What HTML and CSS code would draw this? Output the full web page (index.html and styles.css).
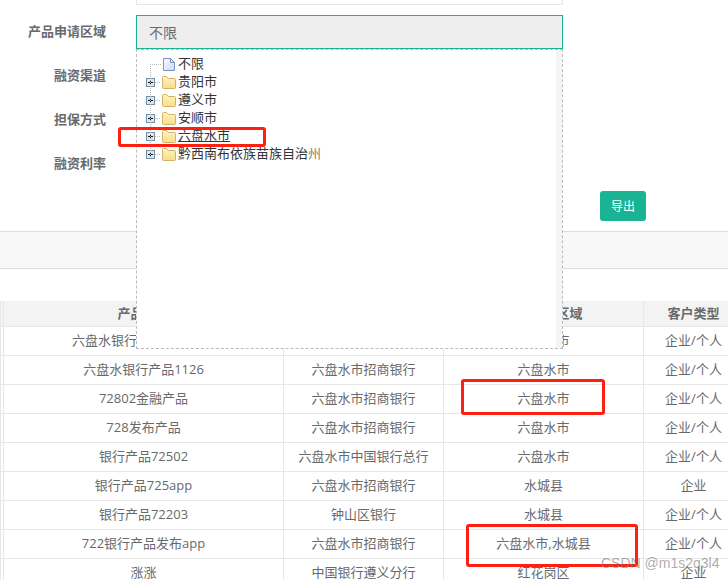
FILE: index.html
```html
<!DOCTYPE html>
<html lang="en">
<head>
    <meta charset="UTF-8">
    <meta name="viewport" content="width=device-width, initial-scale=1.0">
    <title>产品列表</title>
    <link rel="stylesheet" href="styles.css">
</head>
<body>
    <svg class="icon-defs" width="0" height="0">
        <defs>
            <linearGradient id="file-fill" x1="0" y1="0" x2="1" y2="1">
                <stop offset="0" stop-color="#fbfdff"/>
                <stop offset="1" stop-color="#c9d9f3"/>
            </linearGradient>
            <linearGradient id="folder-fill" x1="0" y1="0" x2="0" y2="1">
                <stop offset="0" stop-color="#fdf3c4"/>
                <stop offset="1" stop-color="#f8dd8c"/>
            </linearGradient>
        </defs>
        <symbol id="icon-plus" viewBox="0 0 16 9">
            <rect x="0.5" y="0.5" width="8" height="8" fill="#e6e6e0" stroke="#6f8fb0"/>
            <path d="M2 4.5h5M4.5 2v5" stroke="#111" fill="none"/>
            <path d="M9 4.5h6" stroke="#bbb" stroke-dasharray="1 1" fill="none"/>
        </symbol>
        <symbol id="icon-folder" viewBox="0 0 14 13">
            <path d="M0.5 11.5V1.5q0-1 1-1h3l2 2h6q1 0 1 1v8q0 1-1 1h-11q-1 0-1-1z" fill="url(#folder-fill)" stroke="#d5b263"/>
        </symbol>
        <symbol id="icon-file" viewBox="0 0 12 13">
            <path d="M0.5 0.5h7l4 4v8h-11z" fill="url(#file-fill)" stroke="#7f8fc0"/>
            <path d="M7.5 0.5v4h4z" fill="#dfe8f8" stroke="#7f8fc0"/>
        </symbol>
    </svg>

    <div class="page">
        <form class="search-form">
            <div class="form-row">
                <label></label>
                <div class="field"><input class="text-input" type="text"></div>
            </div>
            <div class="form-row">
                <label>产品申请区域</label>
                <div class="field">
                    <input class="text-input active" type="text" value="不限" readonly>
                    <!-- area tree dropdown -->
                    <div class="tree-menu">
                        <ul class="tree">
                            <li class="leaf">
                                <span class="switch dots"></span>
                                <svg class="node-icon file-icon"><use href="#icon-file"/></svg>
                                <span class="node-name">不限</span>
                            </li>
                            <li>
                                <svg class="switch"><use href="#icon-plus"/></svg>
                                <svg class="node-icon"><use href="#icon-folder"/></svg>
                                <span class="node-name">贵阳市</span>
                            </li>
                            <li>
                                <svg class="switch"><use href="#icon-plus"/></svg>
                                <svg class="node-icon"><use href="#icon-folder"/></svg>
                                <span class="node-name">遵义市</span>
                            </li>
                            <li>
                                <svg class="switch"><use href="#icon-plus"/></svg>
                                <svg class="node-icon"><use href="#icon-folder"/></svg>
                                <span class="node-name">安顺市</span>
                            </li>
                            <li>
                                <svg class="switch"><use href="#icon-plus"/></svg>
                                <svg class="node-icon"><use href="#icon-folder"/></svg>
                                <span class="node-name hover">六盘水市</span>
                            </li>
                            <li>
                                <svg class="switch"><use href="#icon-plus"/></svg>
                                <svg class="node-icon"><use href="#icon-folder"/></svg>
                                <span class="node-name">黔西南布依族苗族自治<span class="last-char">州</span></span>
                            </li>
                        </ul>
                    </div>
                </div>
            </div>
            <div class="form-row">
                <label>融资渠道</label>
                <div class="field"><input class="text-input" type="text"></div>
            </div>
            <div class="form-row">
                <label>担保方式</label>
                <div class="field"><input class="text-input" type="text"></div>
            </div>
            <div class="form-row">
                <label>融资利率</label>
                <div class="field"><input class="text-input" type="text"></div>
            </div>
            <div class="form-actions">
                <button class="btn-export" type="button">导出</button>
            </div>
        </form>

        <div class="band"></div>

        <table class="data-table">
            <colgroup>
                <col class="col-check">
                <col class="col-name">
                <col class="col-bank">
                <col class="col-area">
                <col class="col-type">
            </colgroup>
            <thead>
                <tr><th></th><th>产品名称</th><th>所属银行</th><th>产品申请区域</th><th>客户类型</th></tr>
            </thead>
            <tbody>
                <tr><td></td><td>六盘水银行产品1126001</td><td>六盘水市招商银行</td><td>六盘水市</td><td>企业/个人</td></tr>
                <tr><td></td><td>六盘水银行产品1126</td><td>六盘水市招商银行</td><td>六盘水市</td><td>企业/个人</td></tr>
                <tr><td></td><td>72802金融产品</td><td>六盘水市招商银行</td><td>六盘水市</td><td>企业/个人</td></tr>
                <tr><td></td><td>728发布产品</td><td>六盘水市招商银行</td><td>六盘水市</td><td>企业/个人</td></tr>
                <tr><td></td><td>银行产品72502</td><td>六盘水市中国银行总行</td><td>六盘水市</td><td>企业/个人</td></tr>
                <tr><td></td><td>银行产品725app</td><td>六盘水市招商银行</td><td>水城县</td><td>企业</td></tr>
                <tr><td></td><td>银行产品72203</td><td>钟山区银行</td><td>水城县</td><td>企业/个人</td></tr>
                <tr><td></td><td>722银行产品发布app</td><td>六盘水市招商银行</td><td>六盘水市,水城县</td><td>企业/个人</td></tr>
                <tr><td></td><td>涨涨</td><td>中国银行遵义分行</td><td>红花岗区</td><td>企业</td></tr>
            </tbody>
        </table>
    </div>

    <!-- red marks drawn over the screenshot -->
    <div class="mark mark-tree"></div>
    <div class="mark mark-area1"></div>
    <div class="mark mark-area2"></div>
    <div class="watermark">CSDN @m1s2q3l4</div>
</body>
</html>
```

FILE: styles.css
```css
body {
    margin: 0;
    width: 728px;
    height: 580px;
    overflow: hidden;
    position: relative;
    background-color: #fff;
    font-family: "Open Sans", "Noto Sans CJK SC", sans-serif;
    font-size: 13px;
    color: #676a6c;
}

.icon-defs {
    position: absolute;
}

.page {
    margin-top: -29px;
}

.form-row {
    display: flex;
    align-items: center;
    height: 34px;
    margin-bottom: 10px;
}

.form-row label {
    width: 106px;
    margin-right: 30px;
    padding-bottom: 4px;
    text-align: right;
    font-weight: bold;
}

.field {
    position: relative;
    width: 427px;
}

.text-input {
    display: block;
    box-sizing: border-box;
    width: 100%;
    height: 34px;
    padding: 0 12px;
    border: 1px solid #e5e6e7;
    background-color: #fff;
    font: inherit;
    font-size: 14px;
    color: #676a6c;
    outline: none;
}

.text-input.active {
    border-color: #1ab394;
    background-color: #eee;
}

.tree-menu {
    position: absolute;
    z-index: 10;
    top: 34px;
    left: 0;
    box-sizing: border-box;
    width: 427px;
    height: 300px;
    border: 1px dashed #bbb;
    background-color: #fff;
    background-image: linear-gradient(#f4f4f4, #f4f4f4);
    background-position: right top;
    background-size: 6px 100%;
    background-repeat: no-repeat;
}

.tree {
    list-style: none;
    margin: 0;
    padding: 5px 0 0 9px;
    color: #333;
}

.tree li {
    display: flex;
    align-items: center;
    height: 18px;
    line-height: 18px;
    white-space: nowrap;
}

.switch {
    width: 16px;
    height: 9px;
    flex: none;
}

.dots {
    position: relative;
}

.dots::after {
    content: "";
    position: absolute;
    left: 4px;
    top: 4px;
    width: 10px;
    height: 92px;
    border-top: 1px dotted #bbb;
    border-left: 1px dotted #bbb;
}

.node-icon {
    width: 14px;
    height: 13px;
    margin-right: 2px;
    flex: none;
}

.node-name {
    margin-top: -2px;
}

.hover {
    text-decoration: underline;
}

.last-char {
    color: #8c7b68;
}

.form-actions {
    display: flex;
    justify-content: flex-end;
    padding-right: 82px;
    margin-bottom: 10px;
}

.btn-export {
    width: 46px;
    height: 30px;
    padding: 0;
    border: none;
    border-radius: 3px;
    background-color: #1ab394;
    color: #fff;
    font: inherit;
    font-size: 12px;
}

.band {
    height: 36px;
    border-top: 1px solid #ddd;
    border-bottom: 1px solid #ddd;
    background-color: #f8f8f8;
    margin-bottom: 32px;
}

.data-table {
    width: 743px;
    table-layout: fixed;
    border-collapse: collapse;
}

.col-check { width: 3px; }
.col-name { width: 280px; }
.col-bank { width: 160px; }
.col-area { width: 200px; }
.col-type { width: 100px; }

.data-table th,
.data-table td {
    padding: 0 0 2px;
    border: 1px solid #e7e7e7;
    border-top: none;
    text-align: center;
    white-space: nowrap;
    overflow: hidden;
}

.data-table th {
    height: 23px;
    background-color: #f3f3f3;
    font-weight: bold;
}

.data-table td {
    height: 24px;
    padding-bottom: 4px;
}

.mark {
    position: absolute;
    z-index: 20;
    box-sizing: border-box;
    border: 3px solid #fb2012;
    border-radius: 3px;
}

.mark-tree {
    left: 118px;
    top: 127px;
    width: 148px;
    height: 20px;
}

.mark-area1 {
    left: 461px;
    top: 379px;
    width: 144px;
    height: 36px;
}

.mark-area2 {
    left: 466px;
    top: 524px;
    width: 172px;
    height: 43px;
}

.watermark {
    position: absolute;
    z-index: 30;
    left: 601px;
    top: 554px;
    font-family: "Liberation Sans", sans-serif;
    font-size: 14px;
    line-height: 18px;
    color: rgba(125, 125, 125, 0.65);
    white-space: nowrap;
}
```
